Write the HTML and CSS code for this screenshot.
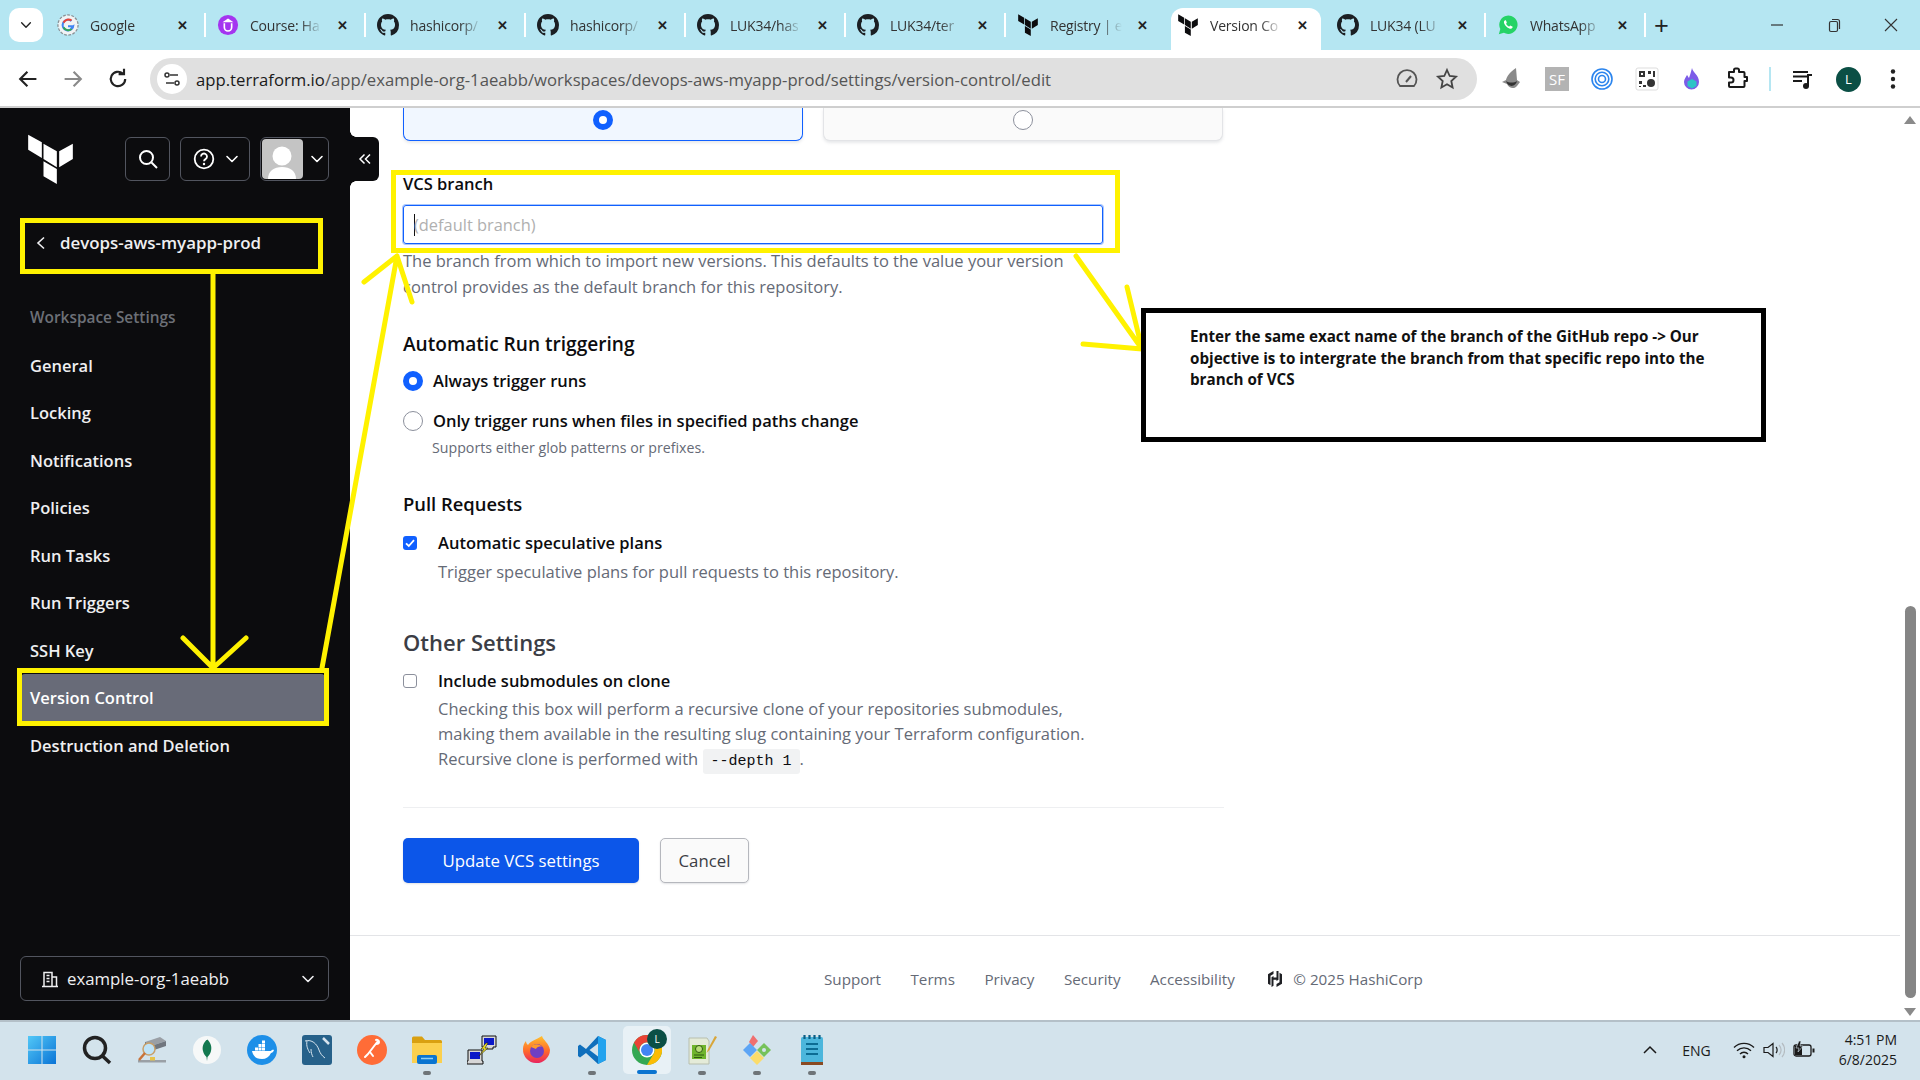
FILE: index.html
```html
<!DOCTYPE html>
<html lang="en">
<head>
  <meta charset="UTF-8">
  <title>Version Control | Terraform</title>
  <link rel="stylesheet" href="styles.css">
</head>
<body>
  <svg class="defs" width="0" height="0">
    <symbol id="gh" viewBox="0 0 16 16"><path fill="#1b1f23" d="M8 0C3.58 0 0 3.58 0 8c0 3.54 2.29 6.53 5.47 7.59.4.07.55-.17.55-.38 0-.19-.01-.82-.01-1.49-2.01.37-2.53-.49-2.69-.94-.09-.23-.48-.94-.82-1.13-.28-.15-.68-.52-.01-.53.63-.01 1.08.58 1.23.82.72 1.21 1.87.87 2.33.66.07-.52.28-.87.51-1.07-1.78-.2-3.64-.89-3.64-3.95 0-.87.31-1.59.82-2.15-.08-.2-.36-1.02.08-2.12 0 0 .67-.21 2.2.82.64-.18 1.32-.27 2-.27.68 0 1.36.09 2 .27 1.53-1.04 2.2-.82 2.2-.82.44 1.1.16 1.92.08 2.12.51.56.82 1.27.82 2.15 0 3.07-1.87 3.75-3.65 3.95.29.25.54.73.54 1.48 0 1.07-.01 1.93-.01 2.2 0 .21.15.46.55.38A8.013 8.013 0 0016 8c0-4.42-3.58-8-8-8z"/></symbol>
    <symbol id="tf" viewBox="0 0 134 150"><path d="M0 2 41 25V72L0 47ZM46 29 86 52V100L46 75ZM93 52 134 29V75L93 100ZM46 82 86 105V150L46 127Z"/></symbol>
    <symbol id="chev" viewBox="0 0 16 16"><path d="M3 5.5 8 10.5 13 5.5" fill="none" stroke="currentColor" stroke-width="1.6" stroke-linecap="round" stroke-linejoin="round"/></symbol>
  </svg>

  <!-- Browser tabs -->
  <div class="tabstrip">
    <div class="tab-menu"><svg class="tab-menu-icon"><use href="#chev"/></svg></div>
    <div class="tab">
      <svg class="favicon" viewBox="0 0 24 24"><circle cx="12" cy="12" r="11" fill="#f1f3f4" stroke="#8a9196" stroke-width="1.4" stroke-dasharray="3 1.6"/><path d="M17.5 12.2H12v2.2h3.1c-.4 1.5-1.6 2.3-3.1 2.3a4.7 4.7 0 1 1 3-8.3l1.6-1.6A7 7 0 1 0 19 12c0 0 0-.5-.1-.9z" fill="#4285f4"/><path d="M6.2 8.7 8 10a4.7 4.7 0 0 1 7-2.1l1.6-1.6A7 7 0 0 0 6.200 8.700z" fill="#ea4335"/><path d="M6.200 15.300 8 14a4.700 4.700 0 0 0 7.100 1.700l1.700 1.300A7 7 0 0 1 6.200 15.300z" fill="#34a853"/></svg>
      <span class="tab-title">Google</span><span class="tab-close">✕</span>
    </div>
    <div class="tab">
      <svg class="favicon" viewBox="0 0 24 24"><circle cx="12" cy="12" r="11" fill="#a435f0"/><path d="M8 10v4.500a4 4 0 0 0 8 0V10M12 6l3 2H9z" fill="none" stroke="#fff" stroke-width="1.800"/></svg>
      <span class="tab-title">Course: Ha</span><span class="tab-close">✕</span>
    </div>
    <div class="tab"><svg class="favicon"><use href="#gh"/></svg><span class="tab-title">hashicorp/</span><span class="tab-close">✕</span></div>
    <div class="tab"><svg class="favicon"><use href="#gh"/></svg><span class="tab-title">hashicorp/</span><span class="tab-close">✕</span></div>
    <div class="tab"><svg class="favicon"><use href="#gh"/></svg><span class="tab-title">LUK34/has</span><span class="tab-close">✕</span></div>
    <div class="tab"><svg class="favicon"><use href="#gh"/></svg><span class="tab-title">LUK34/ter</span><span class="tab-close">✕</span></div>
    <div class="tab"><svg class="favicon tf-icon"><use href="#tf"/></svg><span class="tab-title">Registry | e</span><span class="tab-close">✕</span></div>
    <div class="tab tab-active"><svg class="favicon tf-icon"><use href="#tf"/></svg><span class="tab-title">Version Co</span><span class="tab-close">✕</span></div>
    <div class="tab"><svg class="favicon"><use href="#gh"/></svg><span class="tab-title">LUK34 (LU</span><span class="tab-close">✕</span></div>
    <div class="tab">
      <svg class="favicon" viewBox="0 0 24 24"><path d="M2 22l1.600-5.600A10 10 0 1 1 7.500 20.400z" fill="#25d366"/><path d="M8.500 7c-1 .8-1.200 2-.5 3.500 1 2.300 3 4.300 5.500 5.300 1.500.5 2.600.2 3.300-.8.400-.6.300-1.100 0-1.300l-2-1c-.4-.1-.6 0-.8.300l-.6.700c-1.500-.5-2.800-1.700-3.500-3.200l.6-.7c.2-.3.200-.5.100-.8l-.8-1.900c-.2-.4-.8-.4-1.300-.1z" fill="#fff"/></svg>
      <span class="tab-title">WhatsApp</span><span class="tab-close">✕</span>
    </div>
    <div class="tab-new">+</div>
    <div class="window-controls">
      <svg class="win-btn" viewBox="0 0 16 16"><path d="M2 8h12" stroke="#333" stroke-width="1.200"/></svg>
      <svg class="win-btn" viewBox="0 0 16 16"><rect x="3.500" y="4.500" width="8" height="10" rx="1.500" fill="none" stroke="#333" stroke-width="1.200"/><path d="M6 2.500h5.500a2 2 0 0 1 2 2V12" fill="none" stroke="#333" stroke-width="1.200"/></svg>
      <svg class="win-btn" viewBox="0 0 16 16"><path d="M2 2l12 12M14 2 2 14" stroke="#333" stroke-width="1.100"/></svg>
    </div>
  </div>

  <!-- Browser toolbar -->
  <div class="toolbar">
    <svg class="nav-icon" viewBox="0 0 20 20"><path d="M17 10H4M9.500 4 3.500 10l6 6" fill="none" stroke="#222" stroke-width="1.800"/></svg>
    <svg class="nav-icon" viewBox="0 0 20 20"><path d="M3 10h13M10.500 4l6 6-6 6" fill="none" stroke="#8a8a8a" stroke-width="1.800"/></svg>
    <svg class="nav-icon" viewBox="0 0 20 20"><path d="M16 10a6 6 0 1 1-2-4.500M15 1.500V6h-4.500" fill="none" stroke="#222" stroke-width="1.800"/></svg>
    <div class="omnibox">
      <span class="site-info">
        <svg width="18" height="18" viewBox="0 0 18 18"><path d="M7 5h8M3 13h8" stroke="#333" stroke-width="1.500"/><circle cx="4" cy="5" r="2" fill="none" stroke="#333" stroke-width="1.500"/><circle cx="14" cy="13" r="2" fill="none" stroke="#333" stroke-width="1.500"/></svg>
      </span>
      <span class="url"><b>app.terraform.io</b>/app/example-org-1aeabb/workspaces/devops-aws-myapp-prod/settings/version-control/edit</span>
      <svg class="omni-icon" viewBox="0 0 24 24"><path d="M5 19a9.500 9.500 0 1 1 14 0z" fill="none" stroke="#555" stroke-width="1.800"/><path d="M11 15l5-6" stroke="#555" stroke-width="2"/></svg>
      <svg class="omni-icon" viewBox="0 0 24 24"><path d="M12 3l2.700 6 6.300.700-4.700 4.300 1.300 6.500L12 17.200l-5.600 3.300 1.300-6.500L3 9.700 9.300 9z" fill="none" stroke="#444" stroke-width="1.800"/></svg>
    </div>
    <div class="extensions">
      <svg class="ext" viewBox="0 0 24 24"><path d="M16 1C10 5 7 9 6 13l-4 2 5 2c2 5 8 5 10 2l3-4-3-2z" fill="#8a8a8a"/><path d="M6 14c3 2 8 2 11 0-1 6-9 7-11 0z" fill="#333"/></svg>
      <span class="ext ext-sf">SF</span>
      <svg class="ext" viewBox="0 0 24 24"><circle cx="12" cy="12" r="10" fill="none" stroke="#2b85ee" stroke-width="1.600"/><circle cx="12" cy="12" r="6.800" fill="none" stroke="#2b85ee" stroke-width="1.600"/><circle cx="12" cy="12" r="3.500" fill="none" stroke="#2b85ee" stroke-width="1.600"/></svg>
      <svg class="ext" viewBox="0 0 24 24"><rect x="1" y="1" width="22" height="22" rx="2" fill="#fff" stroke="#ddd"/><path d="M4 4h6v6H4zM6 6h2v2H6zM13 4h3v3h-3zM18 4h2v6h-2zM4 14h3v3H4zM8 18h3v2H8zM4 19h2v1H4z" fill="#333" fill-rule="evenodd"/><circle cx="16" cy="16" r="4" fill="#333"/></svg>
      <svg class="ext" viewBox="0 0 24 24"><path d="M12 1c1 5 7 7 7 14a7.500 7.500 0 0 1-15 0c0-3 2-5 3-7 1 1 1 2 2 3 1-3 2-6 3-10z" fill="#7c5ce8"/><path d="M12 12l4.500 2.500v4.500L12 21.500 7.500 19v-4.500z" fill="#2ec4c6"/></svg>
      <svg class="ext" viewBox="0 0 24 24"><path d="M4 6h5V4a1.500 1.500 0 0 1 1.500-1.500h2A1.500 1.500 0 0 1 14 4v2h4.500a1 1 0 0 1 1 1v4H22v4h-2.500v5a1 1 0 0 1-1 1H5a1 1 0 0 1-1-1v-3.500h2a2 2 0 0 0 0-5H4z" transform="translate(0 -1)" fill="none" stroke="#1a1a1a" stroke-width="2" stroke-linejoin="round"/></svg>
      <span class="ext-sep"></span>
      <svg class="ext" viewBox="0 0 24 24"><path d="M2 5h15M2 9.500h15M2 14h9" stroke="#1a1a1a" stroke-width="2"/><circle cx="15" cy="19" r="3" fill="#1a1a1a"/><path d="M17 19V8h4" fill="none" stroke="#1a1a1a" stroke-width="2"/></svg>
      <span class="profile">L</span>
      <svg class="ext" viewBox="0 0 24 24"><circle cx="12" cy="4.500" r="2.200" fill="#222"/><circle cx="12" cy="12" r="2.200" fill="#222"/><circle cx="12" cy="19.500" r="2.200" fill="#222"/></svg>
    </div>
  </div>

  <div class="app">
    <!-- Sidebar -->
    <aside class="sidebar">
      <div class="side-top">
        <svg class="logo"><use href="#tf"/></svg>
        <div class="side-btn btn-search">
          <svg width="22" height="22" viewBox="0 0 22 22"><circle cx="9.500" cy="9.500" r="6.500" fill="none" stroke="#fff" stroke-width="2"/><path d="M14.500 14.500 20 20" stroke="#fff" stroke-width="2"/></svg>
        </div>
        <div class="side-btn btn-help">
          <svg width="22" height="22" viewBox="0 0 22 22"><circle cx="11" cy="11" r="9.300" fill="none" stroke="#fff" stroke-width="1.800"/><path d="M8 8.500a3 3 0 1 1 4.500 2.600c-1 .6-1.500 1-1.500 2.200" fill="none" stroke="#fff" stroke-width="1.800"/><circle cx="11" cy="16" r="1.200" fill="#fff"/></svg>
          <svg class="side-chev"><use href="#chev"/></svg>
        </div>
        <div class="side-btn btn-user">
          <span class="avatar"><svg width="40" height="40" viewBox="0 0 40 40"><circle cx="20" cy="17" r="9.500" fill="#fff"/><path d="M6 40c0-8 6-12 14-12s14 4 14 12z" fill="#fff"/></svg></span>
          <svg class="side-chev"><use href="#chev"/></svg>
        </div>
      </div>
      <div class="back-link">
        <svg class="back-chev" viewBox="0 0 12 16"><path d="M9 2.500 3 8l6 5.500" fill="none" stroke="#efeff1" stroke-width="1.600"/></svg>
        <span>devops-aws-myapp-prod</span>
      </div>
      <div class="side-heading">Workspace Settings</div>
      <nav class="side-nav">
        <a href="#">General</a>
        <a href="#">Locking</a>
        <a href="#">Notifications</a>
        <a href="#">Policies</a>
        <a href="#">Run Tasks</a>
        <a href="#">Run Triggers</a>
        <a href="#">SSH Key</a>
        <a href="#" class="active">Version Control</a>
        <a href="#">Destruction and Deletion</a>
      </nav>
      <div class="org-select">
        <svg width="18" height="18" viewBox="0 0 18 18"><path d="M3 16.500V2.500h8v14M11 7h4.500v9.500M1 16.500h16M5.500 5.500h3M5.500 8.500h3M5.500 11.500h3" fill="none" stroke="#efeff1" stroke-width="1.500"/></svg>
        <span class="org-name">example-org-1aeabb</span>
        <svg class="org-chev"><use href="#chev"/></svg>
      </div>
    </aside>

    <!-- Main Content -->
    <main class="main">
      <div class="content">
        <div class="cards">
          <div class="card card-on"><span class="radio radio-on"></span></div>
          <div class="card"><span class="radio"></span></div>
        </div>

        <label class="field-label">VCS branch</label>
        <div class="text-input"><span class="caret"></span><span class="placeholder">(default branch)</span></div>
        <p class="help help-field">The branch from which to import new versions. This defaults to the value your version control provides as the default branch for this repository.</p>

        <h3 class="section section-run">Automatic Run triggering</h3>
        <div class="option option-first"><span class="radio radio-on"></span>Always trigger runs</div>
        <div class="option option-second"><span class="radio"></span>Only trigger runs when files in specified paths change</div>
        <p class="hint">Supports either glob patterns or prefixes.</p>

        <h3 class="section section-pr">Pull Requests</h3>
        <div class="check check-pr">
          <span class="checkbox checkbox-on"><svg width="14" height="14" viewBox="0 0 14 14"><path d="M3 7.300 5.800 10 11 4.200" fill="none" stroke="#fff" stroke-width="1.800"/></svg></span>Automatic speculative plans
        </div>
        <p class="help help-check">Trigger speculative plans for pull requests to this repository.</p>

        <h2 class="section-big">Other Settings</h2>
        <div class="check check-sub"><span class="checkbox"></span>Include submodules on clone</div>
        <p class="help help-check help-sub">Checking this box will perform a recursive clone of your repositories submodules, making them available in the resulting slug containing your Terraform configuration. Recursive clone is performed with <code>--depth 1</code>.</p>

        <hr class="divider">
        <div class="actions">
          <button class="btn-primary">Update VCS settings</button>
          <button class="btn-cancel">Cancel</button>
        </div>
      </div>

      <footer class="page-footer">
        <a href="#">Support</a>
        <a href="#">Terms</a>
        <a href="#">Privacy</a>
        <a href="#">Security</a>
        <a href="#">Accessibility</a>
        <span class="copyright">
          <svg width="18" height="18" viewBox="0 0 18 18"><path d="M7.500 1 2 4.200v9.600l2.500 1.400V5.700l3-1.700zM10.500 1v6.500h-3V6L5.500 7.200V17l2-1.200v-6h3V11l2-1.200V1zM13.500 2.800V12.300l-3 1.700V17L16 13.800V4.200z" fill="#1f2024"/></svg>
          © 2025 HashiCorp
        </span>
      </footer>

      <div class="collapse-tab">
        <svg width="14" height="14" viewBox="0 0 14 14"><path d="M6.500 2.500 2 7l4.500 4.500M12 2.500 7.500 7l4.500 4.500" fill="none" stroke="#fff" stroke-width="1.500"/></svg>
      </div>
    </main>

    <!-- Page scrollbar -->
    <div class="scrollbar">
      <span class="arrow-up"></span>
      <span class="thumb"></span>
      <span class="arrow-down"></span>
    </div>
  </div>

  <!-- Windows taskbar -->
  <div class="taskbar">
    <div class="task">
      <svg class="task-icon" viewBox="0 0 30 30"><defs><linearGradient id="winblue" x1="0" y1="0" x2="1" y2="1"><stop offset="0" stop-color="#52c8f7"/><stop offset="1" stop-color="#0a74d6"/></linearGradient></defs><path d="M1 1h13.500v13.500H1zM15.500 1H29v13.500H15.500zM1 15.500h13.500V29H1zM15.500 15.500H29V29H15.500z" fill="url(#winblue)"/></svg>
    </div>
    <div class="task">
      <svg class="task-icon" viewBox="0 0 30 30"><circle cx="13" cy="13" r="10.500" fill="none" stroke="#222" stroke-width="3.500"/><path d="M20.500 21 28 28" stroke="#222" stroke-width="3.500"/></svg>
    </div>
    <div class="task">
      <svg class="task-icon" viewBox="0 0 30 30"><path d="M8 7l15-5 6 4-15 5z" fill="#9a9fa5"/><path d="M8 7l6 4v5l-6-4z" fill="#5a6068"/><path d="M14 11l15-5v5l-15 5z" fill="#70767e"/><path d="M1 25h28v2.500H1z" fill="#9aa0a6"/><circle cx="12" cy="14" r="6" fill="#bfe3f7" stroke="#c8a06a" stroke-width="1.500"/><path d="M8 18 2 25" stroke="#c8733a" stroke-width="2.500"/><rect x="13" y="22" width="5" height="3.500" fill="#e6c34a"/></svg>
    </div>
    <div class="task">
      <svg class="task-icon" viewBox="0 0 30 30"><circle cx="15" cy="15" r="14" fill="#f6f8f8"/><path d="M15 4c4 4 5 8 4 12-.6 3-2.500 5-3.500 6l-.5 4-.5-4c-1-1-3-3-3.500-6-1-4 0-8 4.500-12z" fill="#13784f"/></svg>
    </div>
    <div class="task">
      <svg class="task-icon" viewBox="0 0 30 30"><circle cx="15" cy="15" r="15" fill="#1d8fe8"/><path d="M5 16h19c.5-1 2-1.500 3-1-.5 2-2 3-3 3-2 4-5 6-9 6-6 0-9-3-10-8z" fill="#fff"/><path d="M8 12.500h3v3H8zM11.500 12.500h3v3h-3zM15 12.500h3v3h-3zM11.500 9h3v3h-3zM15 9h3v3h-3zM15 5.500h3v3h-3z" fill="#fff"/></svg>
    </div>
    <div class="task">
      <svg class="task-icon" viewBox="0 0 30 30"><rect width="30" height="30" rx="3" fill="#26618a"/><path d="M3 6c7-2 12 3 14 9 1 3 3 6 6 8M5 6c-1 5 1 9 3 12M9 14c0 4 1 6 2 8" fill="none" stroke="#d6e4ee" stroke-width="1"/><path d="M21 3l6 6" stroke="#d6e4ee" stroke-width="2.500"/></svg>
    </div>
    <div class="task">
      <svg class="task-icon" viewBox="0 0 30 30"><circle cx="15" cy="15" r="15" fill="#ff6c37"/><path d="M21 6l-10 13M19 5c1.500-.5 3 .5 3 2s-1.500 2-3 2M11 19l-3 3M13 17l3 4" fill="none" stroke="#fff" stroke-width="2" stroke-linecap="round"/></svg>
    </div>
    <div class="task task-open">
      <svg class="task-icon" viewBox="0 0 30 30"><path d="M0 3a1.500 1.500 0 0 1 1.500-1.500H10l3 3.500h15.500A1.500 1.500 0 0 1 30 6.500V9H0z" fill="#d9a011"/><path d="M0 8h30v20H0z" fill="#fbd04e"/><rect x="5" y="20" width="20" height="9" rx="2" fill="#0a74d0"/><path d="M9 23.500h12" stroke="#8fd0f5" stroke-width="1.500"/></svg>
    </div>
    <div class="task">
      <svg class="task-icon" viewBox="0 0 30 30"><path d="M15 1h14v11h-3v2h-9v-2h-2z" fill="#d7d7d7" stroke="#111"/><rect x="17" y="3" width="10" height="7" fill="#0a18c8"/><path d="M1 15h14v11h1v3H0v-3h1z" fill="#d7d7d7" stroke="#111"/><rect x="3" y="17" width="10" height="7" fill="#0a18c8"/><path d="M19 8l-5 6h3l-5 7 9-8h-3l3-5z" fill="#f0e020" stroke="#222" stroke-width=".6"/></svg>
    </div>
    <div class="task">
      <svg class="task-icon" viewBox="0 0 30 30"><defs><linearGradient id="ffx" x1="0" y1="0" x2="0" y2="1"><stop offset="0" stop-color="#ffc22e"/><stop offset=".55" stop-color="#ff6a2b"/><stop offset="1" stop-color="#e8245f"/></linearGradient></defs><path d="M20 1c1 4 7 7 8 14a13.500 13.500 0 1 1-27-1c0-3 1-6 3-8 0 2 1 3 2 4 2-4 8-5 14-9z" fill="url(#ffx)"/><circle cx="15" cy="16" r="7" fill="#6f3fc4"/><path d="M9 12c3-4 9-3 11 0-3-1-5 0-6 2z" fill="#ff9a2b"/></svg>
    </div>
    <div class="task task-open">
      <svg class="task-icon" viewBox="0 0 30 30"><path d="M21 1l8 4v20l-8 4-12-11-6 4.500-2-1.500V11l2-1.500L9 14z" fill="#0f6fbc"/><path d="M21 1l8 4v20l-8 4z" fill="#23a3ee"/><path d="M21 8.500 12.500 15l8.500 6.500z" fill="#d3e3ec"/></svg>
    </div>
    <div class="task task-chrome">
      <svg class="task-icon" viewBox="0 0 30 30"><circle cx="15" cy="15" r="15" fill="#34a853"/><path d="M2 7.500A15 15 0 0 1 28 7.500H15A7.500 7.500 0 0 0 8.500 19z" fill="#ea4335"/><path d="M28 7.500A15 15 0 0 1 15 30L21.500 19A7.500 7.500 0 0 0 15 7.500z" fill="#fbbc05"/><circle cx="15" cy="15" r="7.500" fill="#fff"/><circle cx="15" cy="15" r="6" fill="#4285f4"/></svg>
      <span class="task-badge">L</span>
      <span class="task-active"></span>
    </div>
    <div class="task task-open">
      <svg class="task-icon" viewBox="0 0 30 30"><path d="M2 3h18l2 3v23H2z" fill="#e4ebd8" stroke="#b8bfae"/><path d="M5 10h14v14H5z" fill="#6fb52c"/><circle cx="12" cy="14" r="3.500" fill="#b9df7a" stroke="#2f5a10"/><path d="M7 20h10M7 22.500h8" stroke="#2f5a10"/><path d="M28 1l-7 13-1.500 4 3-3L30 2z" fill="#d8a63a"/></svg>
    </div>
    <div class="task task-open">
      <svg class="task-icon" viewBox="0 0 30 30"><path d="M9 1l5 6-5 6-4-5z" fill="#f06f6f" transform="translate(2 -1)"/><path d="M8 8l7 7-7 7-7-7z" fill="#5da5f5"/><path d="M22 8l7 7-7 7-7-7z" fill="#76c25a"/><path d="M15 16l7 7-7 7-7-7z" fill="#fbdc6b"/><circle cx="22" cy="15" r="2" fill="#d3e3ec"/></svg>
    </div>
    <div class="task task-open">
      <svg class="task-icon" viewBox="0 0 30 30"><rect x="4" y="2" width="22" height="26" rx="1.500" fill="#4cb6dc"/><path d="M4 27h22v3H4z" fill="#8a4a22"/><path d="M9 9h12M9 14h12M9 19h12" stroke="#0c6c94" stroke-width="2"/><path d="M7.500 0v4M12.500 0v4M17.500 0v4M22.500 0v4" stroke="#0b5e85" stroke-width="2.200"/></svg>
    </div>

    <div class="tray">
      <svg class="tray-chev" viewBox="0 0 16 16"><path d="M2 11 8 5l6 6" fill="none" stroke="#1a1a1a" stroke-width="1.500"/></svg>
      <span class="tray-lang">ENG</span>
      <svg class="tray-icon" viewBox="0 0 22 18"><path d="M1 6.500a14 14 0 0 1 20 0M4 9.800a10 10 0 0 1 14 0M7 13a5.500 5.500 0 0 1 8 0" fill="none" stroke="#1a1a1a" stroke-width="1.300"/><circle cx="11" cy="15.700" r="1.500" fill="#1a1a1a"/></svg>
      <svg class="tray-icon" viewBox="0 0 22 18"><path d="M1 6.500h4l5-4v13l-5-4H1z" fill="none" stroke="#1a1a1a" stroke-width="1.200"/><path d="M13 6c1.500 1.500 1.500 4.500 0 6" fill="none" stroke="#1a1a1a" stroke-width="1.200"/><path d="M16 4c2.500 3 2.500 7 0 10M19 2c3.500 4 3.500 10 0 14" fill="none" stroke="#b5bcc1" stroke-width="1.200"/></svg>
      <svg class="tray-icon" viewBox="0 0 22 18"><rect x="1" y="4" width="17" height="11" rx="2" fill="none" stroke="#1a1a1a" stroke-width="1.300"/><path d="M2 5h7v9H2z" fill="#1a1a1a"/><path d="M19.500 7.500h2v4h-2z" fill="#1a1a1a"/><path d="M6 0 3 7h3l-1 4 5-6H7l1-5z" fill="#1a1a1a" stroke="#d3e3ec" stroke-width=".6"/></svg>
      <div class="clock"><span>4:51 PM</span><span>6/8/2025</span></div>
    </div>
  </div>

  <!-- Screenshot annotations drawn on top -->
  <svg class="marks" viewBox="0 0 1920 1080">
    <g fill="none" stroke="#fff200" stroke-width="5">
      <rect x="22.500" y="220.500" width="298" height="51"/>
      <rect x="393.500" y="172.500" width="724" height="78"/>
      <rect x="19.500" y="670.500" width="307" height="53"/>
    </g>
    <g fill="none" stroke="#fff200" stroke-width="5" stroke-linecap="round" stroke-linejoin="round">
      <path d="M213 274V668M183 638 213 668 246 638"/>
      <path d="M322 668 397 256M364 282 397 256 412 302"/>
      <path d="M1076 256 1142 349M1127 287 1142 349 1083 344"/>
    </g>
  </svg>

  <div class="note">Enter the same exact name of the branch of the GitHub repo -&gt; Our objective is to intergrate the branch from that specific repo into the branch of VCS</div>
</body>
</html>
```

FILE: styles.css
```css
/* General Styles */
* {
  box-sizing: border-box;
}

body {
  margin: 0;
  width: 1920px;
  height: 1080px;
  overflow: hidden;
  display: flex;
  flex-direction: column;
  position: relative;
  font-family: 'Open Sans', 'Liberation Sans', sans-serif;
  color: #0c0c0e;
  background-color: #fff;
}

a {
  color: inherit;
  text-decoration: none;
}

.defs {
  position: absolute;
}

/* Browser tabs */
.tabstrip {
  height: 50px;
  display: flex;
  align-items: center;
  padding-left: 9px;
  background-color: #b5e6f2;
}

.tab-menu {
  width: 34px;
  height: 34px;
  margin-right: 3px;
  border-radius: 10px;
  background-color: #fff;
  display: flex;
  align-items: center;
  justify-content: center;
  color: #222;
}

.tab-menu-icon {
  width: 14px;
  height: 14px;
}

.tab {
  width: 160px;
  height: 34px;
  padding-left: 11px;
  display: flex;
  align-items: center;
  position: relative;
  font-size: 14px;
  letter-spacing: -0.2px;
  color: #333;
}

.tab::after {
  content: "";
  position: absolute;
  right: 0;
  top: 5px;
  height: 24px;
  width: 2px;
  background-color: #fff;
}

.tab-active {
  width: 150px;
  height: 42px;
  margin: 8px 5px 0;
  padding: 0 0 8px 6px;
  background-color: #fff;
  border-radius: 12px 12px 0 0;
}

.tab-active::after,
.tab:nth-child(8)::after {
  display: none;
}

.favicon {
  width: 22px;
  height: 22px;
  flex-shrink: 0;
}

.tf-icon {
  fill: #0c0c0e;
}

.tab-title {
  width: 72px;
  margin-left: 11px;
  white-space: nowrap;
  overflow: hidden;
  -webkit-mask-image: linear-gradient(to right, #000 70%, transparent);
  mask-image: linear-gradient(to right, #000 70%, transparent);
}

.tab-close {
  margin-left: 15px;
  font-size: 13px;
  font-weight: 700;
  color: #222;
}

.tab-new {
  margin-left: 8px;
  font-size: 26px;
  font-weight: 400;
  line-height: 30px;
  color: #222;
}

.window-controls {
  margin-left: auto;
  display: flex;
  gap: 41px;
  padding-right: 21px;
}

.win-btn {
  width: 16px;
  height: 16px;
}

/* Browser toolbar */
.toolbar {
  height: 58px;
  padding: 2px 0 0 16px;
  display: flex;
  align-items: center;
  background-color: #fff;
  border-bottom: 2px solid #cfcfcf;
  border-radius: 12px 12px 0 0;
}

.nav-icon {
  width: 24px;
  height: 24px;
  margin-right: 21px;
}

.omnibox {
  width: 1327px;
  height: 42px;
  margin-left: -1px;
  padding: 0 18px 0 7px;
  display: flex;
  align-items: center;
  border-radius: 21px;
  background-color: #e0e0e0;
}

.site-info {
  width: 30px;
  height: 30px;
  margin-right: 9px;
  border-radius: 50%;
  background-color: #fff;
  display: flex;
  align-items: center;
  justify-content: center;
}

.url {
  flex: 1;
  font-size: 16.700px;
  color: #555;
  white-space: nowrap;
}

.url b {
  font-weight: 400;
  color: #1a1a1a;
}

.omni-icon {
  width: 24px;
  height: 24px;
  margin-left: 16px;
}

.extensions {
  margin-left: 23px;
  display: flex;
  align-items: center;
  gap: 21px;
}

.ext {
  width: 24px;
  height: 24px;
  flex-shrink: 0;
}

.ext-sf {
  background-color: #b3b3b3;
  color: #fff;
  font-size: 15px;
  line-height: 24px;
  text-align: center;
}

.ext-sep {
  width: 2px;
  height: 24px;
  margin: 0 -1px;
  background-color: #b5e6f2;
}

.profile {
  width: 25px;
  height: 25px;
  margin: 0 -1px 0 0;
  border-radius: 50%;
  background-color: #0b4f45;
  color: #fff;
  font-size: 13px;
  line-height: 25px;
  text-align: center;
}

/* App area */
.app {
  height: 912px;
  display: flex;
}

/* Sidebar */
.sidebar {
  width: 350px;
  flex-shrink: 0;
  display: flex;
  flex-direction: column;
  background-color: #0c0c0e;
  color: #efeff1;
}

.side-top {
  height: 96px;
  padding-top: 29px;
  display: flex;
  align-items: flex-start;
}

.logo {
  width: 45px;
  height: 50px;
  margin: -3px 0 0 28px;
  fill: #fff;
}

.side-btn {
  height: 44px;
  border: 1px solid #52555f;
  border-radius: 6px;
  display: flex;
  align-items: center;
  justify-content: center;
}

.btn-search {
  width: 45px;
  margin-left: 52px;
}

.btn-help {
  width: 70px;
  margin-left: 10px;
  gap: 9px;
  padding-left: 3px;
}

.btn-user {
  width: 69px;
  margin-left: 10px;
  padding: 0 1px;
  justify-content: flex-start;
}

.avatar {
  width: 41px;
  height: 40px;
  border-radius: 4px;
  overflow: hidden;
  background-color: #c4c4c4;
  margin-right: 6px;
}

.side-chev {
  width: 16px;
  height: 16px;
  color: #fff;
}

.back-link {
  height: 39px;
  margin-top: 19px;
  padding-left: 35px;
  display: flex;
  align-items: center;
  gap: 13px;
  font-size: 16.900px;
  font-weight: 600;
}

.back-chev {
  width: 12px;
  height: 16px;
}

.side-heading {
  margin-top: 46px;
  padding-left: 30px;
  font-size: 15.400px;
  line-height: 20px;
  font-weight: 600;
  color: #6d7077;
}

.side-nav {
  margin-top: 13.500px;
  padding: 0 24px 0 20px;
  display: flex;
  flex-direction: column;
}

.side-nav a {
  height: 47.500px;
  padding-left: 10px;
  display: flex;
  align-items: center;
  font-size: 16.500px;
  font-weight: 600;
  border-radius: 5px;
}

.side-nav a.active {
  background-color: #686b78;
  color: #fff;
}

.org-select {
  height: 45px;
  margin: auto 21px 19px 20px;
  padding: 0 12px 0 20px;
  display: flex;
  align-items: center;
  gap: 8px;
  border: 1px solid #52555f;
  border-radius: 6px;
  font-size: 16.800px;
  font-weight: 500;
}

.org-name {
  flex: 1;
}

.org-chev {
  width: 16px;
  height: 16px;
}

/* Main Content */
.main {
  flex: 1;
  display: flex;
  flex-direction: column;
  position: relative;
}

.content {
  width: 874px;
  padding-left: 53px;
}

.cards {
  height: 33px;
  display: flex;
  gap: 20px;
}

.card {
  width: 400px;
  display: flex;
  justify-content: center;
  align-items: center;
  padding-bottom: 9px;
  background-color: #fafafa;
  border: 1px solid #e3e4e7;
  border-top: none;
  border-radius: 0 0 7px 7px;
  box-shadow: 0 2px 3px rgba(101, 106, 118, 0.15);
}

.card-on {
  background-color: #f1f7ff;
  border-color: #1060ff;
}

.radio {
  width: 20px;
  height: 20px;
  flex-shrink: 0;
  border-radius: 50%;
  background-color: #fff;
  border: 1px solid #8c909c;
}

.radio-on {
  border: 6px solid #1060ff;
}

.field-label {
  display: block;
  margin-top: 31px;
  font-size: 16.500px;
  line-height: 24px;
  font-weight: 600;
}

.text-input {
  height: 39px;
  margin-top: 9px;
  width: 700px;
  padding-left: 10px;
  display: flex;
  align-items: center;
  border: 1px solid #1060ff;
  border-radius: 3px;
  box-shadow: 0 0 0 1px #a9c6fb;
}

.caret {
  width: 1px;
  height: 22px;
  margin-right: -1px;
  background-color: #111;
}

.placeholder {
  font-size: 16.400px;
  color: #b0b0b0;
}

.help {
  margin: 0;
  font-size: 16.500px;
  line-height: 25px;
  color: #656a76;
}

.help-field {
  margin-top: 4px;
  width: 700px;
  line-height: 25.500px;
}

.section {
  margin: 0;
  line-height: 26px;
  font-weight: 600;
}

.section-run {
  margin-top: 32px;
  font-size: 19.100px;
}

.section-pr {
  margin-top: 33px;
  font-size: 18.400px;
}

.option {
  display: flex;
  align-items: center;
  gap: 10px;
  font-size: 16.500px;
  line-height: 24px;
  font-weight: 600;
}

.option-first {
  margin-top: 12px;
}

.option-second {
  margin-top: 16px;
}

.hint {
  margin: 5px 0 0 29px;
  font-size: 14.200px;
  line-height: 20px;
  color: #656a76;
}

.check {
  display: flex;
  align-items: center;
  gap: 21px;
  font-size: 16.500px;
  line-height: 24px;
  font-weight: 600;
}

.check-pr {
  margin-top: 14px;
}

.check-sub {
  margin-top: 12px;
}

.checkbox {
  width: 14px;
  height: 14px;
  flex-shrink: 0;
  border: 1px solid #8c909c;
  border-radius: 3px;
  background-color: #fff;
  display: flex;
}

.checkbox-on {
  border: none;
  background-color: #1060ff;
}

.help-check {
  margin-top: 5px;
  padding-left: 35px;
  line-height: 24px;
}

.help-sub {
  margin-top: 3px;
  width: 700px;
  line-height: 25px;
}

.section-big {
  margin: 43px 0 0;
  font-size: 22px;
  line-height: 30px;
  font-weight: 600;
  color: #3b3d45;
}

code {
  padding: 4px 8px;
  border-radius: 3px;
  background-color: #f1f2f3;
  font-family: 'Liberation Mono', monospace;
  font-size: 15px;
  color: #0c0c0e;
}

.divider {
  height: 1px;
  margin: 33px 0 0;
  border: none;
  background-color: #eeeff1;
}

.actions {
  margin-top: 30px;
  display: flex;
  gap: 21px;
}

.btn-primary,
.btn-cancel {
  height: 45px;
  font-family: inherit;
  font-size: 16.800px;
  font-weight: 500;
  border-radius: 5px;
  box-shadow: 0 1px 2px rgba(101, 106, 118, 0.2);
}

.btn-primary {
  width: 236px;
  color: #fff;
  border: none;
  background-color: #0c56e9;
}

.btn-cancel {
  width: 89px;
  color: #3b3d45;
  background-color: #fafafa;
  border: 1px solid #b5b7bd;
}

.page-footer {
  height: 85px;
  margin-top: auto;
  padding: 1px 0 0 474px;
  display: flex;
  align-items: center;
  gap: 29.500px;
  border-top: 1px solid #e3e4e7;
  font-size: 15.200px;
  color: #656a76;
}

.copyright {
  margin-left: 2px;
  display: flex;
  align-items: center;
  gap: 9px;
}

.collapse-tab {
  position: absolute;
  left: 0;
  top: 29px;
  width: 29px;
  height: 44px;
  display: flex;
  align-items: center;
  justify-content: center;
  background-color: #0c0c0e;
  border-radius: 0 6px 6px 0;
}

/* concave corners where the tab meets the sidebar */
.collapse-tab::before,
.collapse-tab::after {
  content: "";
  position: absolute;
  left: 0;
  width: 6px;
  height: 6px;
}

.collapse-tab::before {
  top: -6px;
  background: radial-gradient(circle at 100% 0, transparent 5.500px, #0c0c0e 6px);
}

.collapse-tab::after {
  bottom: -6px;
  background: radial-gradient(circle at 100% 100%, transparent 5.500px, #0c0c0e 6px);
}

/* Page scrollbar */
.scrollbar {
  width: 20px;
  display: flex;
  flex-direction: column;
  align-items: center;
}

.arrow-up,
.arrow-down {
  width: 0;
  height: 0;
  border-left: 6px solid transparent;
  border-right: 6px solid transparent;
}

.arrow-up {
  margin-top: 8px;
  border-bottom: 8px solid #8a8a8a;
}

.arrow-down {
  margin-top: 10px;
  border-top: 8px solid #8a8a8a;
}

.thumb {
  width: 11px;
  height: 392px;
  margin-top: 482px;
  border-radius: 6px;
  background-color: #858585;
}

/* Windows taskbar */
.taskbar {
  height: 60px;
  padding: 0 0 2px 14px;
  display: flex;
  align-items: center;
  background-color: #d3e3ec;
  border-top: 2px solid #b4c0c8;
}

.task {
  width: 55px;
  height: 48px;
  display: flex;
  align-items: center;
  justify-content: center;
  position: relative;
  flex-shrink: 0;
}

.task-icon {
  width: 30px;
  height: 30px;
}

.task-open::after {
  content: "";
  position: absolute;
  bottom: -1px;
  left: 24px;
  width: 8px;
  height: 4px;
  border-radius: 2px;
  background-color: #6e7478;
}

.task-chrome::before {
  content: "";
  position: absolute;
  left: 4px;
  top: 0;
  width: 48px;
  height: 48px;
  border-radius: 5px;
  background-color: #e8f1f6;
}

.task-chrome .task-icon {
  position: relative;
}

.task-badge {
  position: absolute;
  left: 28px;
  top: 3px;
  width: 20px;
  height: 20px;
  border-radius: 50%;
  background-color: #0b4f45;
  color: #fff;
  font-size: 10px;
  line-height: 20px;
  text-align: center;
}

.task-active {
  position: absolute;
  left: 18px;
  bottom: 0;
  width: 20px;
  height: 4px;
  border-radius: 2px;
  background-color: #0b74d0;
}

.tray {
  margin-left: auto;
  padding-right: 23px;
  display: flex;
  align-items: center;
  color: #1a1a1a;
}

.tray-chev {
  width: 16px;
  height: 16px;
  margin-right: 24px;
}

.tray-lang {
  font-size: 14px;
  margin-right: 22px;
}

.tray-icon {
  width: 22px;
  height: 18px;
  margin-right: 8px;
}

.clock {
  margin-left: 16px;
  display: flex;
  flex-direction: column;
  align-items: flex-end;
  font-size: 14px;
  line-height: 20px;
}

/* Screenshot annotations */
.marks {
  position: absolute;
  left: 0;
  top: 0;
  width: 1920px;
  height: 1080px;
  pointer-events: none;
}

.note {
  position: absolute;
  left: 1141px;
  top: 308px;
  width: 625px;
  height: 134px;
  padding: 13px 44px 0 44px;
  border: 5px solid #000;
  background-color: #fff;
  font-size: 15.200px;
  line-height: 21.500px;
  font-weight: 700;
  color: #111;
}
```
